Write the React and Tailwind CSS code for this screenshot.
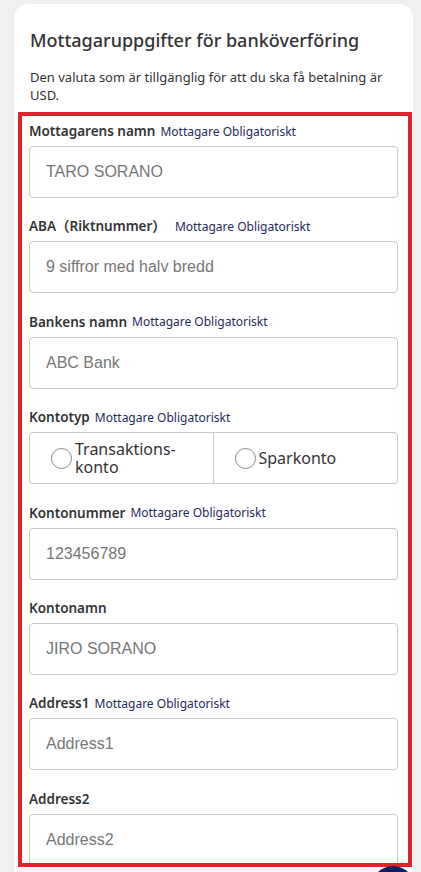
import { useState } from 'react'

const FONT = { fontFamily: '"Noto Sans", "Noto Sans CJK JP", "Open Sans", sans-serif' }
const INPUT_FONT = { fontFamily: '"Liberation Sans", Arial, sans-serif' }

function Label({ text, required = true, gap = 'ml-[5px]' }) {
  return (
    <div className="flex items-center h-[18px] leading-[18px] mb-[6px] whitespace-nowrap">
      <span className="text-[13.5px] font-semibold text-[#333]">{text}</span>
      {required && <span className={`${gap} text-[12px] text-[#1f2a5c] pt-[1px]`}>Mottagare Obligatoriskt</span>}
    </div>
  )
}

function TextField({ label, placeholder, required, gap }) {
  return (
    <div>
      <Label text={label} required={required} gap={gap} />
      <input
        type="text"
        placeholder={placeholder}
        style={INPUT_FONT}
        className="w-full h-[52px] border border-[#c9c9c9] rounded-[4px] px-[16px] text-[16px] text-[#333] placeholder:text-[#777] bg-white outline-none"
      />
    </div>
  )
}

function Radio({ checked }) {
  return (
    <span className="w-[21px] h-[21px] shrink-0 rounded-full border-[1.5px] border-[#8a8a8a] bg-white flex items-center justify-center">
      {checked && <span className="w-[11px] h-[11px] rounded-full bg-[#1f2a5c]" />}
    </span>
  )
}

export default function App() {
  const [type, setType] = useState('')

  return (
    <div style={FONT} className="min-h-screen bg-[#f0f0f0] pt-[4px] pl-[14px] pr-[8px] overflow-hidden">
      <div className="bg-white rounded-[14px] px-[15px] pt-[24px] pb-[40px]">
        <h1 className="text-[18px] leading-[24px] font-medium text-[#333] pl-[1px]">Mottagaruppgifter för banköverföring</h1>
        <p className="mt-[16px] text-[13px] leading-[18px] text-[#333] pl-[1px]">
          Den valuta som är tillgänglig för att du ska få betalning är USD.
        </p>

        <div className="relative mt-[18px]">
          {/* red highlight frame */}
          <div className="absolute -left-[11px] -right-[14px] -top-[10px] -bottom-[1px] border-[4px] border-[#e3212b] pointer-events-none z-10" />

          <div className="flex flex-col gap-[19.4px]">
            <TextField label="Mottagarens namn" placeholder="TARO SORANO" />
            <TextField label="ABA（Riktnummer）" placeholder="9 siffror med halv bredd" gap="ml-[9px]" />
            <TextField label="Bankens namn" placeholder="ABC Bank" />

            <div>
              <Label text="Kontotyp" />
              <div className="grid grid-cols-2 h-[52px] border border-[#c9c9c9] rounded-[4px]">
                <button
                  type="button"
                  onClick={() => setType('checking')}
                  className="flex items-center gap-[3px] pl-[21px] border-r border-[#c9c9c9] text-left"
                >
                  <Radio checked={type === 'checking'} />
                  <span className="text-[16px] leading-[18px] text-[#333]">
                    Transaktions-
                    <br />
                    konto
                  </span>
                </button>
                <button
                  type="button"
                  onClick={() => setType('savings')}
                  className="flex items-center gap-[3px] pl-[21px] text-left"
                >
                  <Radio checked={type === 'savings'} />
                  <span className="text-[16px] leading-[18px] text-[#333]">Sparkonto</span>
                </button>
              </div>
            </div>

            <TextField label="Kontonummer" placeholder="123456789" />
            <TextField label="Kontonamn" placeholder="JIRO SORANO" required={false} />
            <TextField label="Address1" placeholder="Address1" />
            <TextField label="Address2" placeholder="Address2" required={false} />
          </div>
        </div>
      </div>

      {/* chat button peeking in at bottom */}
      <div className="fixed left-[371px] top-[866px] w-[44px] h-[44px] rounded-full bg-[#0d2160] z-20" />
    </div>
  )
}
